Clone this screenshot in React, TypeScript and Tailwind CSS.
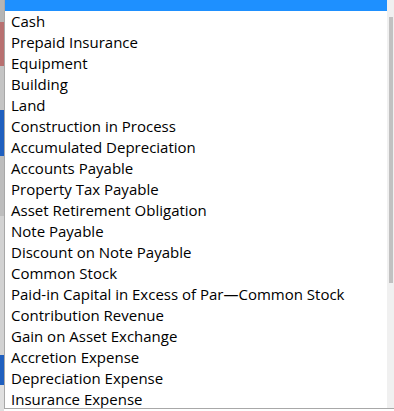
const items = [
  "Cash",
  "Prepaid Insurance",
  "Equipment",
  "Building",
  "Land",
  "Construction in Process",
  "Accumulated Depreciation",
  "Accounts Payable",
  "Property Tax Payable",
  "Asset Retirement Obligation",
  "Note Payable",
  "Discount on Note Payable",
  "Common Stock",
  "Paid-in Capital in Excess of Par\u2014Common Stock",
  "Contribution Revenue",
  "Gain on Asset Exchange",
  "Accretion Expense",
  "Depreciation Expense",
  "Insurance Expense",
];

export default function App() {
  return (
    <div className="w-[394px] h-[411px] overflow-hidden flex bg-white font-['Open_Sans',sans-serif]">
      {/* page content peeking out behind the dropdown */}
      <div className="w-[4px] flex flex-col shrink-0">
        <div className="h-[22px] bg-[#b5b5b5]" />
        <div className="h-[44px] bg-[#b87070]" />
        <div className="h-[44px] bg-[#c4c4c4]" />
        <div className="h-[46px] bg-[#1f5fbf]" />
        <div className="h-[60px] bg-[#bdbdbd]" />
        <div className="h-[139px] bg-[#d2d2d2]" />
        <div className="h-[30px] bg-[#1f5fbf]" />
        <div className="flex-1 bg-[#e0e0e0]" />
      </div>
      <div className="flex-1 h-[409px] flex border-l border-b border-[#a8a8a8] bg-white overflow-hidden">
        <ul className="flex-1 -mt-[10px] text-[15px] leading-[21px] text-black">
          <li className="h-[21px] bg-[#1e90ff]" />
          {items.map((item) => (
            <li key={item} className="h-[21px] pl-[6px] whitespace-nowrap">
              {item}
            </li>
          ))}
        </ul>
        <div className="w-[7px] bg-[#f0f0f0] pt-[17px] pl-[2px] pr-[1px]">
          <div className="h-[266px] bg-[#c1c1c1]" />
        </div>
      </div>
    </div>
  );
}
